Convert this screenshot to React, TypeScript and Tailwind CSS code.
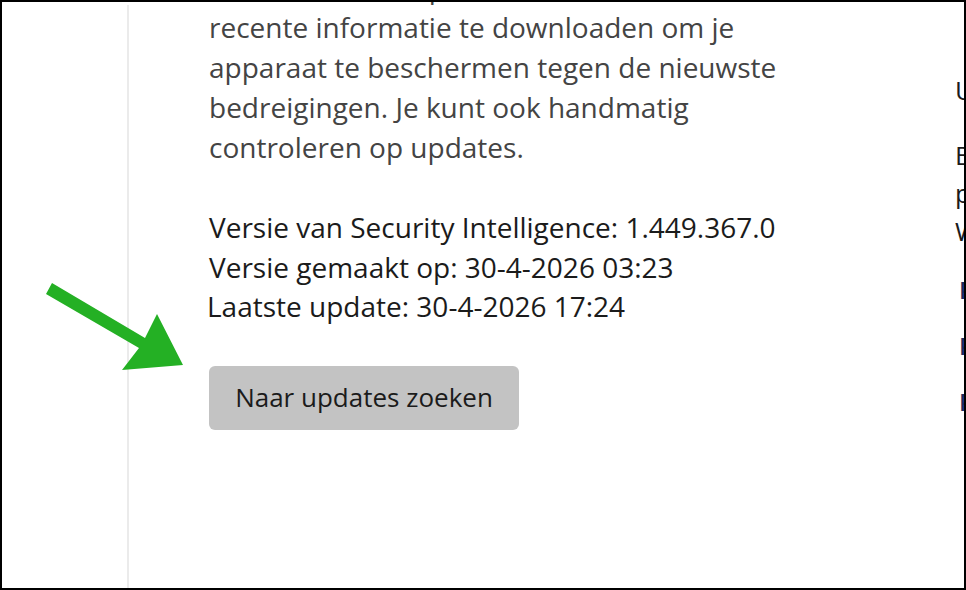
export default function App() {
  return (
    <div className="relative h-[590px] w-[966px] overflow-hidden border-2 border-black bg-white font-['Open_Sans','Noto_Sans',sans-serif]">
      <div className="flex h-full">
        <aside className="mt-[3px] w-[127px] shrink-0 border-r-2 border-[#ebebeb]" />

        <main className="flex w-[826px] shrink-0 flex-col pl-[80px]">
          <p className="-mt-[35px] text-[28px] leading-[40px] text-[#444444]">
            Defender haalt updates binnen om de meest
            <br />
            recente informatie te downloaden om je
            <br />
            apparaat te beschermen tegen de nieuwste
            <br />
            bedreigingen. Je kunt ook handmatig
            <br />
            controleren op updates.
          </p>

          <div className="mt-[41px] text-[28px] leading-[39.5px] text-[#1b1b1b]">
            <p>Versie van Security Intelligence: 1.449.367.0</p>
            <p>Versie gemaakt op: 30-4-2026 03:23</p>
            <p className="-ml-[2px]">Laatste update: 30-4-2026 17:24</p>
          </div>

          <button
            className="mt-[39px] h-[64px] w-[310px] rounded-[6px] bg-[#c3c3c3] text-[26px] text-[#1b1b1b]"
            type="button"
          >
            Naar updates zoeken
          </button>
        </main>

        <section className="flex flex-1 flex-col overflow-hidden whitespace-nowrap pt-[68px] text-[26px] text-[#1b1b1b]">
          <h2 className="leading-[40px]">Updates</h2>
          <p className="mt-[26px] leading-[38px]">
            Bekijk
            <br />
            privacy
            <br />
            Windows
          </p>
          <div className="mt-[25px] flex flex-col gap-[26px] pl-[4px] text-[24px] font-semibold leading-[30px] text-[#1a2a5e]">
            <span>Privacy</span>
            <span>Privacy</span>
            <span>Privacy</span>
          </div>
        </section>
      </div>

      <svg
        className="pointer-events-none absolute left-0 top-0"
        width="966"
        height="590"
        viewBox="0 0 966 590"
      >
        <polygon
          points="44,292 50,281 143,336 155,312 181,363 120,368 137,346"
          fill="#24b024"
        />
      </svg>
    </div>
  );
}
